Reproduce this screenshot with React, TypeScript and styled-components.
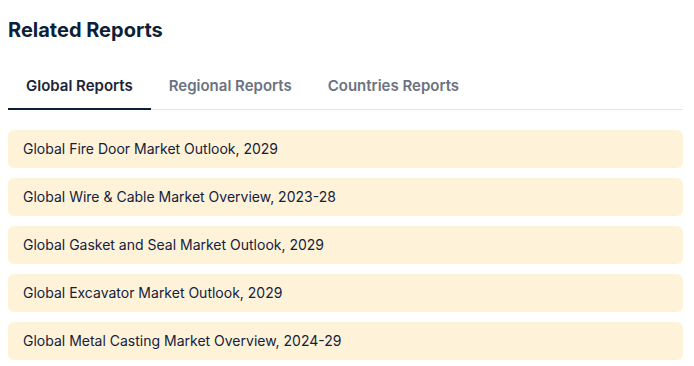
import React, { useState } from "react";
import styled, { createGlobalStyle } from "styled-components";

const GlobalStyle = createGlobalStyle`
	body {
		margin: 0;
		background: #ffffff;
		font-family: Inter, "Noto Sans", sans-serif;
	}
`;

const Container = styled.section`
	width: 675px;
	padding: 16px 0 0 8px;
`;

const Title = styled.h2`
	margin: 0;
	font-size: 20px;
	line-height: 28px;
	font-weight: 700;
	color: #0b1f3a;
`;

const TabBar = styled.div`
	display: flex;
	margin-top: 19px;
	border-bottom: 1px solid #e5e7eb;
`;

const Tab = styled.button<{ $active: boolean }>`
	position: relative;
	border: none;
	background: none;
	padding: 12px 18px;
	font-family: inherit;
	font-size: 15px;
	line-height: 22px;
	font-weight: 600;
	cursor: pointer;
	color: ${(props) => (props.$active ? "#1c2536" : "#6b7280")};
	&::after {
		content: "";
		position: absolute;
		left: 0;
		right: 0;
		bottom: -1px;
		height: 2px;
		background: ${(props) => (props.$active ? "#0b1f3a" : "transparent")};
	}
`;

const List = styled.div`
	display: flex;
	flex-direction: column;
	gap: 10px;
	margin-top: 20px;
`;

const ReportItem = styled.a`
	display: block;
	background: #fef3d8;
	border-radius: 6px;
	padding: 0 15px;
	height: 38px;
	line-height: 38px;
	font-size: 14px;
	color: #14213d;
	text-decoration: none;
`;

const tabs = ["Global Reports", "Regional Reports", "Countries Reports"];

const reports = [
	"Global Fire Door Market Outlook, 2029",
	"Global Wire & Cable Market Overview, 2023-28",
	"Global Gasket and Seal Market Outlook, 2029",
	"Global Excavator Market Outlook, 2029",
	"Global Metal Casting Market Overview, 2024-29",
];

function App() {
	const [tab, setTab] = useState(tabs[0]);
	return (
		<>
			<GlobalStyle />
			<Container>
				<Title>Related Reports</Title>
				<TabBar>
					{tabs.map((name) => (
						<Tab key={name} $active={name === tab} onClick={() => setTab(name)}>
							{name}
						</Tab>
					))}
				</TabBar>
				<List>
					{reports.map((report) => (
						<ReportItem key={report} href="#">
							{report}
						</ReportItem>
					))}
				</List>
			</Container>
		</>
	);
}

export default App;
